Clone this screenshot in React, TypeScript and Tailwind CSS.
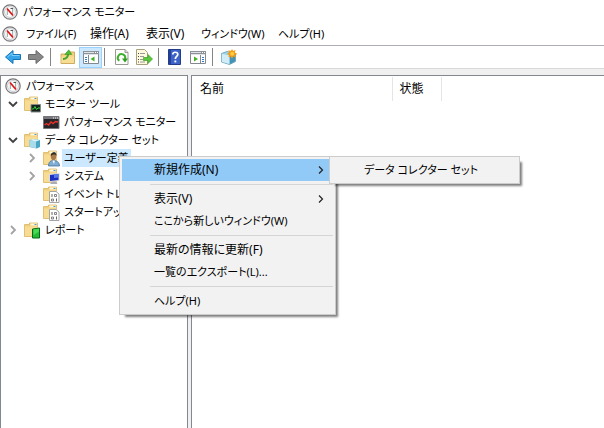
import type { ReactNode } from "react";

const GaugeIcon = () => (
  <svg width="16" height="16" viewBox="0 0 16 16" aria-hidden="true">
    <circle cx="8" cy="8" r="7.2" fill="#efefef" stroke="#77777b" strokeWidth="1.2" />
    <circle cx="8" cy="8" r="5.4" fill="#fff" stroke="#b9b9bd" strokeWidth="0.7" />
    <path d="M5.300 11V6M10.700 10V5" fill="none" stroke="#8fa39a" strokeWidth="1" />
    <path d="M5 4.500l6 7" stroke="#e01217" strokeWidth="1.700" />
    <path d="M8.500 4.500H11" fill="none" stroke="#4a5a58" strokeWidth="1" />
  </svg>
);

const ArrowIcon = ({ forward }: { forward?: boolean }) => (
  <svg width="18" height="16" viewBox="0 0 18 16" aria-hidden="true">
    {forward ? (
      <path d="M1.500 5.500h7.500v-4L16.500 8 9 14.500v-4H1.500z" fill="#888" stroke="#6b6b6b" />
    ) : (
      <>
        <path d="M16.500 5.500H9v-4L1.500 8 9 14.500v-4h7.500z" fill="#35a4e8" stroke="#1873b4" />
        <path d="M15.500 6.500H8V4L3.500 8" fill="none" stroke="#7cd0fa" />
      </>
    )}
  </svg>
);

const UpFolderIcon = () => (
  <svg width="16" height="16" viewBox="0 0 16 16" aria-hidden="true">
    <path d="M1 5h5l1-2h7.500v11.500H1z" fill="#f3d381" stroke="#c59c47" strokeWidth="0.8" />
    <path d="M1.500 7.500H14v6.500H1.500z" fill="#f7dc94" />
    <path d="M3 10c4 0 5-2 5.200-5.500" fill="none" stroke="#3fa52b" strokeWidth="2" />
    <path d="M4.800 5.500L8.800 0.800l3 4.700z" fill="#4fbd35" stroke="#2d8a1f" strokeWidth="0.500" />
  </svg>
);

const PaneIcon = ({ right }: { right?: boolean }) => (
  <svg width="16" height="14" viewBox="0 0 16 14" aria-hidden="true">
    <path d="M0.500 1.500h15v12H0.500z" fill="#fff" stroke="#83898f" />
    <path d="M0 1h16v4H0z" fill="#8d9298" />
    <path d="M1 2.500h10M1 4.500h14" stroke="#dfe3e6" />
    <path d="M12 2.500h1M14 2.500h1" stroke="#fff" />
    {right ? (
      <>
        <path d="M10.500 5v8" stroke="#83898f" />
        <path d="M12 7.500h2M12 9.500h2M12 11.500h2" stroke="#3478c6" />
        <path d="M4 6.500v5L8 9z" fill="#43b02a" />
      </>
    ) : (
      <>
        <path d="M5.500 5v8" stroke="#83898f" />
        <path d="M2 7.500h2M2 9.500h2M2 11.500h2" stroke="#3478c6" />
        <path d="M11.500 6.500v5l-4-2.500z" fill="#43b02a" />
      </>
    )}
  </svg>
);

const RefreshIcon = () => (
  <svg width="14" height="16" viewBox="0 0 14 16" aria-hidden="true">
    <path d="M0.500 0.500h9.500l3 3v12H0.500z" fill="#fdfdfb" stroke="#9b9b94" />
    <path d="M10 0.500v3h3" fill="#ddd" stroke="#9b9b94" />
    <path d="M4.300 11.800A3.700 3.700 0 1 1 10 10" fill="none" stroke="#3fb02d" strokeWidth="2" />
    <path d="M7 9.500h6l-3 4z" fill="#2f9c22" />
  </svg>
);

const ExportIcon = () => (
  <svg width="17" height="16" viewBox="0 0 17 16" aria-hidden="true">
    <path d="M0.500 0.500h8l3 3v12h-11z" fill="#fff9dd" stroke="#a79f80" />
    <path d="M2 4.500h1M2 7.500h1M2 10.500h1M2 13h1" stroke="#444" />
    <path d="M4 4.500h5M4 7.500h4M4 10.500h3M4 13h5" stroke="#9a9a9a" />
    <path d="M7.500 8.500H12v-3L16.500 10 12 14.500v-3H7.500z" fill="#58c83d" stroke="#3c9f28" strokeWidth="0.700" />
  </svg>
);

const HelpIcon = () => (
  <svg width="14" height="16" viewBox="0 0 14 16" aria-hidden="true">
    <path d="M0.500 0.500h12v15h-12z" fill="#3d62c8" stroke="#233c87" />
    <path d="M1 1h2v14H1z" fill="#22409b" />
    <path d="M4.800 5.500c0-3 5-3 5 0 0 2-2.500 2-2.500 4.500" fill="none" stroke="#fff" strokeWidth="1.700" />
    <path d="M6.400 11.500h1.900v1.900H6.400z" fill="#fff" />
  </svg>
);

const CollectorIcon = () => (
  <svg width="17" height="16" viewBox="0 0 17 16" aria-hidden="true">
    <path d="M0.500 4.500L6 2.500l8.500 2v8L8.500 15.500l-8-2.500z" fill="#9fd5ea" stroke="#5f9db8" strokeWidth="0.800" />
    <path d="M0.800 4.800l7.700 1.900v8.300l-7.700-2.300z" fill="#d2edf5" />
    <path d="M8.700 7l5.500-2v7.300l-5.500 2.900z" fill="#4293b6" />
    <path d="M11 0l1.200 2 2.400-1-.8 2.400L16.500 5l-2.700 1 .8 2.500-2.500-.9L11 10 9.800 7.500l-2.500.8.9-2.400L5.800 5l2.400-1.300-.8-2.500 2.500.9z" fill="#f59a11" />
    <circle cx="11.200" cy="4.800" r="2" fill="#ffcb3d" />
  </svg>
);

const FolderIcon = ({ children }: { children: ReactNode }) => (
  <svg width="17" height="17" viewBox="0 0 17 17" aria-hidden="true">
    <path d="M0.500 2.500h5V1h8v13.500h-13z" fill="#efcf7f" stroke="#dcb562" strokeWidth="0.800" />
    <path d="M6.500 1.500h6.500v2H6.500z" fill="#fff8dd" />
    <path d="M10.500 2h2v1h-2z" fill="#489ed0" />
    <path d="M1 4.500h12.500V14H1z" fill="#f8dc94" />
    {children}
  </svg>
);

const MonitorToolsIcon = () => (
  <FolderIcon>
    <path d="M7 8.500h9.500v7.500H7z" fill="#13251b" stroke="#8a8a8a" />
    <path d="M8 13h1.500l1.500-2.500 1.500 3 1.500-1.500h2" fill="none" stroke="#36d13f" />
  </FolderIcon>
);

const DataSetIcon = () => (
  <FolderIcon>
    <path d="M5.500 8l3-1 7.500 1v7l-3.500 1.500-7-1.500z" fill="#49a5c5" />
    <path d="M5.500 8.300l6.500 1v7l-6.500-1.300z" fill="#a9dbea" />
    <path d="M5.500 8l3-1 7.500 1-4 1.500z" fill="#dff4f9" />
  </FolderIcon>
);

const UserIcon = () => (
  <FolderIcon>
    <path d="M5.500 16c0-4 2-5.500 5-5.500s6 1.500 6 5.500z" fill="#7fadd4" stroke="#35648d" strokeWidth="0.700" />
    <ellipse cx="10.500" cy="6.500" rx="2.700" ry="3.700" fill="#a87a50" />
    <path d="M7.700 6c0-5 6.300-5 5.800 0-1-1.800-3-2-5.800 0z" fill="#392a20" />
    <path d="M9.500 10.500h2.300L11 14z" fill="#fff" />
  </FolderIcon>
);

const SystemIcon = () => (
  <FolderIcon>
    <path d="M6 6l10.500-1v8L6 14z" fill="#d5dae4" />
    <path d="M7 7l8.500-1v6L7 13z" fill="#1c2fc0" />
    <path d="M11 6.500l4.500-.5v3.500l-4.500.5z" fill="#547bea" />
    <path d="M9 13.500h4l1.500 2.500H7z" fill="#a9adb5" />
  </FolderIcon>
);

const TraceIcon = () => (
  <FolderIcon>
    <path d="M6.500 5.500h6.500l3 2.500v8.500H6.500z" fill="#fff" stroke="#a5a5a5" />
    <path d="M9 8v3M13.500 12.500v3" stroke="#666" />
    <path d="M11.500 8.500h2v2h-2zM8.500 13h2v2h-2z" fill="none" stroke="#666" strokeWidth="0.800" />
  </FolderIcon>
);

const ReportIcon = () => (
  <FolderIcon>
    <path d="M8.500 7l7-1v10h-7z" fill="#23bc32" stroke="#08681a" />
    <path d="M9.500 7.500l5.500-.8v3L9.500 13z" fill="#4bd955" />
  </FolderIcon>
);

const ChartIcon = () => (
  <svg width="17" height="17" viewBox="0 0 17 17" aria-hidden="true">
    <path d="M0.500 2.500h15.500v12H0.500z" fill="#29262a" stroke="#77777b" />
    <path d="M1 3h15v2H1z" fill="#77777f" />
    <path d="M10 4h1M12 4h1M14 4h1" stroke="#eee" />
    <path d="M1.500 11l2-1.500 2 1.500 2.500-3 2 1.500 2.500-2 2.500.5" fill="none" stroke="#e6322c" strokeWidth="1.400" />
  </svg>
);

const Chevron = ({ open }: { open?: boolean }) => (
  <svg width="10" height="10" viewBox="0 0 10 10" aria-hidden="true">
    {open ? (
      <path d="M1 3l4 4 4-4" fill="none" stroke="#404040" strokeWidth="1.800" />
    ) : (
      <path d="M3 1l4 4-4 4" fill="none" stroke="#a3a3a3" strokeWidth="1.800" />
    )}
  </svg>
);

type TreeNode = {
  label: string;
  icon: ReactNode;
  open?: boolean;
  closed?: boolean;
  selected?: boolean;
  children?: TreeNode[];
};

const treeNodes: TreeNode[] = [
  {
    label: "モニター ツール",
    icon: <MonitorToolsIcon />,
    open: true,
    children: [{ label: "パフォーマンス モニター", icon: <ChartIcon /> }],
  },
  {
    label: "データ コレクター セット",
    icon: <DataSetIcon />,
    open: true,
    children: [
      { label: "ユーザー定義", icon: <UserIcon />, closed: true, selected: true },
      { label: "システム", icon: <SystemIcon />, closed: true },
      { label: "イベント トレ", icon: <TraceIcon /> },
      { label: "スタートアップ", icon: <TraceIcon /> },
    ],
  },
  { label: "レポート", icon: <ReportIcon />, closed: true },
];

const TreeItem = ({ node }: { node: TreeNode }) => (
  <li role="treeitem" aria-expanded={node.children ? node.open : undefined} aria-selected={!!node.selected}>
    <div className="flex h-[18px] items-center">
      <span className="flex w-[19px] shrink-0 items-center pl-[3px]">
        {(node.open || node.closed) && (
          <button type="button" aria-label={node.label}>
            <Chevron open={node.open} />
          </button>
        )}
      </span>
      <span className="w-[19px] shrink-0">{node.icon}</span>
      <span className={`px-[2px] whitespace-nowrap ${node.selected ? "bg-[#cce8ff]" : ""}`}>
        {node.label}
      </span>
    </div>
    {node.children && (
      <ul role="group" className="pl-[19px]">
        {node.children.map((child) => (
          <TreeItem key={child.label} node={child} />
        ))}
      </ul>
    )}
  </li>
);

const Divider = () => <span className="h-[18px] w-px shrink-0 bg-[#858585]" />;

type ToolButtonProps = { label: string; active?: boolean; children: ReactNode };

const ToolButton = ({ label, active, children }: ToolButtonProps) => (
  <button
    type="button"
    aria-label={label}
    className={`flex h-[21px] w-[23px] shrink-0 items-center justify-center border ${
      active ? "border-[#99d1ff] bg-[#cce8ff]" : "border-transparent"
    }`}
  >
    {children}
  </button>
);

const Toolbar = () => (
  <div role="toolbar" className="flex h-[24px] items-center border-y border-t-[#adadb3] border-b-[#d9d9d9] pl-px">
    <ToolButton label="戻る"><ArrowIcon /></ToolButton>
    <ToolButton label="進む"><ArrowIcon forward /></ToolButton>
    <span className="w-[3px]" />
    <Divider />
    <span className="w-[5px]" />
    <ToolButton label="上へ"><UpFolderIcon /></ToolButton>
    <ToolButton label="ツリーの表示" active><PaneIcon /></ToolButton>
    <span className="w-[2px]" />
    <Divider />
    <span className="w-[5px]" />
    <ToolButton label="最新の情報に更新"><RefreshIcon /></ToolButton>
    <ToolButton label="エクスポート"><ExportIcon /></ToolButton>
    <span className="w-[2px]" />
    <Divider />
    <span className="w-[4px]" />
    <ToolButton label="ヘルプ"><HelpIcon /></ToolButton>
    <ToolButton label="操作ウィンドウ"><PaneIcon right /></ToolButton>
    <span className="w-[3px]" />
    <Divider />
    <span className="w-[5px]" />
    <ToolButton label="新しいデータ コレクター セット"><CollectorIcon /></ToolButton>
  </div>
);

type MenuItemProps = { label: string; arrow?: boolean; active?: boolean; kana?: boolean };

const MenuItem = ({ label, arrow, active, kana }: MenuItemProps) => (
  <button
    type="button"
    role="menuitem"
    className={`flex h-[22px] w-full items-center pr-[9px] pl-[32px] text-left whitespace-nowrap ${
      active ? "bg-[#91c9f7]" : ""
    } ${kana ? "text-[11px]" : "text-[12px]"}`}
  >
    <span className="flex-1">{label}</span>
    {arrow && (
      <svg width="6" height="8" viewBox="0 0 6 8" aria-hidden="true">
        <path d="M1 0.500L4.500 4 1 7.500" fill="none" stroke="#222" strokeWidth="1.200" />
      </svg>
    )}
  </button>
);

const MenuLine = () => <div role="separator" className="my-[3px] ml-[28px] h-px bg-[#d5d5d5]" />;

const menuBox = "absolute border border-[#ccc] bg-[#f2f2f2] p-[2px] shadow-[4px_4px_2px_-2px_rgba(0,0,0,0.5)]";

const ContextMenu = () => (
  <>
    <div role="menu" className={`${menuBox} top-[156px] left-[119px] w-[217px]`}>
      <MenuItem label="新規作成(N)" arrow active />
      <MenuLine />
      <MenuItem label="表示(V)" arrow />
      <MenuItem label="ここから新しいウィンドウ(W)" kana />
      <MenuLine />
      <MenuItem label="最新の情報に更新(F)" />
      <MenuItem label="一覧のエクスポート(L)..." kana />
      <MenuLine />
      <MenuItem label="ヘルプ(H)" kana />
    </div>
    <div role="menu" className={`${menuBox} top-[156px] left-[329px] w-[191px]`}>
      <MenuItem label="データ コレクター セット" kana />
    </div>
  </>
);

const App = () => {
  return (
    <div className="relative flex h-screen flex-col overflow-hidden bg-white font-['Noto_Sans','Noto_Sans_CJK_JP',sans-serif] text-[11px] leading-[18px] text-black [font-feature-settings:'palt']">
      <header className="flex h-[23px] items-center gap-[5px] pl-[2px]">
        <GaugeIcon />
        <h1>パフォーマンス モニター</h1>
      </header>
      <nav className="flex h-[22px] items-center pl-[2px] whitespace-nowrap">
        <GaugeIcon />
        <button type="button" className="ml-[8px] w-[64px] text-left">ファイル(F)</button>
        <button type="button" className="w-[56px] text-left text-[12px]">操作(A)</button>
        <button type="button" className="w-[55px] text-left text-[12px]">表示(V)</button>
        <button type="button" className="w-[77px] text-left">ウィンドウ(W)</button>
        <button type="button" className="text-left">ヘルプ(H)</button>
      </nav>
      <Toolbar />
      <main className="flex min-h-0 flex-1 gap-[3px] bg-[#f0f0f0] pt-[6px]">
        <aside className="w-[188px] shrink-0 overflow-hidden border-x border-t border-[#828790] bg-white pt-px pl-[4px]">
          <div className="flex h-[18px] items-center gap-[5px]">
            <GaugeIcon />
            <span>パフォーマンス</span>
          </div>
          <ul role="tree">
            {treeNodes.map((node) => (
              <TreeItem key={node.label} node={node} />
            ))}
          </ul>
        </aside>
        <section className="min-w-0 flex-1 border-t border-l border-[#828790] bg-white pt-px">
          <table className="w-full table-fixed border-collapse text-[12px]">
            <thead>
              <tr className="h-[24px] text-left">
                <th className="w-[200px] border-r border-[#e5e5e5] pl-[8px] font-normal">名前</th>
                <th className="w-[49px] border-r border-[#e5e5e5] pl-[7px] font-normal">状態</th>
                <th />
              </tr>
            </thead>
          </table>
        </section>
      </main>
      <ContextMenu />
    </div>
  );
};

export default App;
